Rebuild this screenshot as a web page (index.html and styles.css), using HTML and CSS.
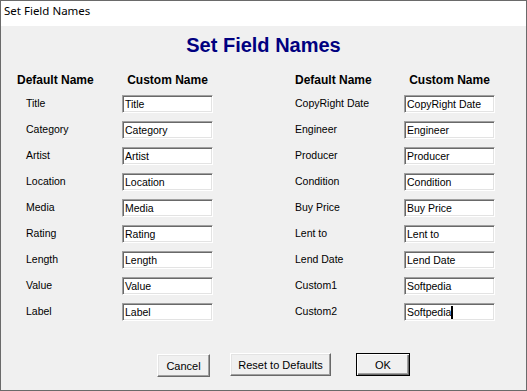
FILE: index.html
```html
<!DOCTYPE html>
<html lang="en">
<head>
  <meta charset="UTF-8" />
  <title>Set Field Names</title>
  <link rel="stylesheet" href="styles.css">
</head>
<body>
  <div class="window">
    <div class="titlebar">Set Field Names</div>
    <div class="content">
      <h1>Set Field Names</h1>
      <div class="columns">
        <div class="fields left">
          <div class="head">Default Name</div>
          <div class="head center">Custom Name</div>
          <div class="name">Title</div><div class="field">Title</div>
          <div class="name">Category</div><div class="field">Category</div>
          <div class="name">Artist</div><div class="field">Artist</div>
          <div class="name">Location</div><div class="field">Location</div>
          <div class="name">Media</div><div class="field">Media</div>
          <div class="name">Rating</div><div class="field">Rating</div>
          <div class="name">Length</div><div class="field">Length</div>
          <div class="name">Value</div><div class="field">Value</div>
          <div class="name">Label</div><div class="field">Label</div>
        </div>
        <div class="fields right">
          <div class="head">Default Name</div>
          <div class="head center">Custom Name</div>
          <div class="name">CopyRight Date</div><div class="field">CopyRight Date</div>
          <div class="name">Engineer</div><div class="field">Engineer</div>
          <div class="name">Producer</div><div class="field">Producer</div>
          <div class="name">Condition</div><div class="field">Condition</div>
          <div class="name">Buy Price</div><div class="field">Buy Price</div>
          <div class="name">Lent to</div><div class="field">Lent to</div>
          <div class="name">Lend Date</div><div class="field">Lend Date</div>
          <div class="name">Custom1</div><div class="field">Softpedia</div>
          <div class="name">Custom2</div><div class="field">Softpedia<span class="caret"></span></div>
        </div>
      </div>
      <div class="buttons">
        <button class="btn cancel">Cancel</button>
        <button class="btn reset">Reset to Defaults</button>
        <button class="btn ok">OK</button>
      </div>
    </div>
  </div>
</body>
</html>
```

FILE: styles.css
```css
* { box-sizing: border-box; }
body { margin: 0; background: #f0f0f0; font-family: "Liberation Sans", Arial, sans-serif; font-size: 10.5px; color: #000; }
.window { width: 527px; height: 391px; border: 1px solid #6a6a6a; background: #f0f0f0; }
.titlebar { height: 25px; background: #fff; padding: 2px 0 0 3px; font-family: "Noto Sans", sans-serif; font-size: 11.5px; line-height: 16px; color: #000; }
.content { padding-top: 7px; }
h1 { margin: 0; text-align: center; font-size: 20px; line-height: 24px; font-weight: bold; color: #000080; }
.columns { display: flex; margin-top: 16px; }
.fields { display: grid; grid-template-rows: 14px; grid-auto-rows: 18px; row-gap: 8px; }
.left { margin-left: 16px; grid-template-columns: 105px 91px; }
.right { margin-left: 82px; grid-template-columns: 109px 91px; }
.head { font-size: 12px; font-weight: bold; line-height: 14px; white-space: nowrap; }
.head.center { text-align: center; }
.name { padding-top: 1px; line-height: 14px; white-space: nowrap; }
.left .name { padding-left: 9px; }
.field { height: 18px; background: #fff; border: 1px solid; border-color: #a0a0a0 #fff #fff #a0a0a0; box-shadow: inset 1px 1px #696969, inset -1px -1px #e3e3e3; padding: 2px 0 0 2px; line-height: 13px; white-space: nowrap; overflow: hidden; }
.caret { display: inline-block; width: 2px; height: 13px; background: #000; vertical-align: top; }
.buttons { display: flex; align-items: flex-start; margin-top: 32px; padding-left: 156px; }
.btn { height: 23px; padding: 0; font-family: "Liberation Sans", Arial, sans-serif; font-size: 11px; color: #000; background: #f0f0f0; border: 1px solid; border-color: #fff #696969 #696969 #fff; box-shadow: inset -1px -1px #a0a0a0, inset 1px 1px #e3e3e3; }
.cancel { width: 53px; margin-top: 1px; }
.reset { width: 101px; margin-left: 20px; }
.ok { width: 54px; margin-left: 25px; border: 1px solid #000; box-shadow: inset 1px 1px #fff, inset -1px -1px #696969, inset -2px -2px #a0a0a0; }
```
